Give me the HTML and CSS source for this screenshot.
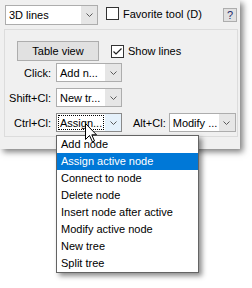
FILE: index.html
```html
<!DOCTYPE html>
<html>
<head>
<meta charset="utf-8">
<link rel="stylesheet" href="styles.css">
</head>
<body>
<div class="stage">
  <div class="window">
    <div class="toprow">
      <div class="combo wide">
        <span class="combo-text">3D lines</span>
        <span class="combo-btn"><svg width="7" height="4" viewBox="0 0 7 4"><polyline points="0.5,0.5 3.5,3.5 6.5,0.5" fill="none" stroke="#5a5a5a" stroke-width="1"/></svg></span>
      </div>
      <div class="check fav"><span class="box"></span><span class="check-label">Favorite tool (D)</span></div>
      <span class="help">?</span>
    </div>
    <div class="group">
      <div class="btnrow">
        <div class="btn">Table view</div>
        <div class="check show"><span class="box"><svg width="11" height="11" viewBox="0 0 11 11"><polyline points="1.5,5.5 4,8 9.5,2.5" fill="none" stroke="#222" stroke-width="1.2"/></svg></span><span class="check-label">Show lines</span></div>
      </div>
      <div class="rows">
        <div class="row">
          <span class="lbl">Click:</span>
          <div class="combo small">
            <span class="combo-text">Add n...</span>
            <span class="combo-btn"><svg width="7" height="4" viewBox="0 0 7 4"><polyline points="0.5,0.5 3.5,3.5 6.5,0.5" fill="none" stroke="#5a5a5a" stroke-width="1"/></svg></span>
          </div>
        </div>
        <div class="row">
          <span class="lbl">Shift+Cl:</span>
          <div class="combo small">
            <span class="combo-text">New tr...</span>
            <span class="combo-btn"><svg width="7" height="4" viewBox="0 0 7 4"><polyline points="0.5,0.5 3.5,3.5 6.5,0.5" fill="none" stroke="#5a5a5a" stroke-width="1"/></svg></span>
          </div>
        </div>
        <div class="row">
          <span class="lbl">Ctrl+Cl:</span>
          <div class="combo small open">
            <span class="combo-text"><span class="focus">Assign...</span></span>
            <span class="combo-btn"><svg width="7" height="4" viewBox="0 0 7 4"><polyline points="0.5,0.5 3.5,3.5 6.5,0.5" fill="none" stroke="#5a5a5a" stroke-width="1"/></svg></span>
          </div>
          <span class="lbl2">Alt+Cl:</span>
          <div class="combo alt">
            <span class="combo-text">Modify ...</span>
            <span class="combo-btn"><svg width="7" height="4" viewBox="0 0 7 4"><polyline points="0.5,0.5 3.5,3.5 6.5,0.5" fill="none" stroke="#5a5a5a" stroke-width="1"/></svg></span>
          </div>
        </div>
      </div>
    </div>
  </div>
  <ul class="menu">
    <li>Add node</li>
    <li class="sel">Assign active node</li>
    <li>Connect to node</li>
    <li>Delete node</li>
    <li>Insert node after active</li>
    <li>Modify active node</li>
    <li>New tree</li>
    <li>Split tree</li>
  </ul>
  <svg class="cursor" width="13" height="20" viewBox="0 0 13 20"><path d="M0.5,0.5 L0.5,16.5 L4.5,12.5 L7.5,19 L9.5,18 L6.8,11.8 L11.5,11.8 Z" fill="#fff" stroke="#000" stroke-width="1" stroke-linejoin="miter"/></svg>
</div>
</body>
</html>
```

FILE: styles.css
```css
* { box-sizing: border-box; }
html, body { margin: 0; padding: 0; background: #fff; }
body {
  font-family: "Liberation Sans", Arial, sans-serif;
  font-size: 11px;
  color: #000;
}
.stage {
  position: relative;
  width: 252px;
  height: 288px;
  overflow: hidden;
}
.window {
  width: 240px;
  height: 149px;
  background: #f0f0f0;
  box-shadow: 3px 3px 6px rgba(0, 0, 0, 0.5);
}
.toprow {
  display: flex;
  align-items: flex-start;
  padding: 5px 3px 0 5px;
}
.combo {
  display: flex;
  background: #fff;
  border: 1px solid #adadad;
  height: 19px;
}
.combo.wide { width: 93px; height: 20px; }
.combo.small { width: 66px; }
.combo.alt { width: 67px; }
.combo-text {
  flex: 1;
  display: flex;
  align-items: center;
  padding-left: 3px;
  white-space: nowrap;
  overflow: hidden;
}
.combo-btn {
  width: 16px;
  display: flex;
  align-items: center;
  justify-content: center;
  background: #e6e6e6;
}
.combo.open { border-color: #8a8a8a; }
.combo.open .combo-btn { background: #e5f1fb; }
.combo.open .combo-text { padding: 1px; }
.focus {
  display: flex;
  align-items: center;
  height: 100%;
  width: 100%;
  padding-left: 1px;
  border: 1px dotted #000;
}
.check {
  display: flex;
  align-items: center;
}
.box {
  width: 13px;
  height: 13px;
  border: 1px solid #333;
  background: #fff;
  display: flex;
  align-items: center;
  justify-content: center;
}
.check-label { margin-left: 4px; }
.fav { margin-left: 8px; margin-top: 2px; }
.help {
  margin-left: auto;
  margin-top: 3px;
  width: 14px;
  height: 14px;
  border: 1px solid #adadad;
  background: #e1e1e1;
  color: #1b2a6b;
  display: flex;
  align-items: center;
  justify-content: center;
  font-size: 11px;
}
.group {
  margin: 4px 0 0 4px;
  width: 234px;
  height: 108px;
  border: 1px solid #dcdcdc;
  padding-top: 11px;
}
.btnrow {
  display: flex;
  align-items: center;
  padding-left: 12px;
}
.btn {
  width: 82px;
  height: 20px;
  border: 1px solid #adadad;
  background: #e1e1e1;
  display: flex;
  align-items: center;
  justify-content: center;
}
.show { margin-left: 12px; }
.rows {
  display: flex;
  flex-direction: column;
  gap: 6px;
  margin-top: 2px;
}
.row {
  display: flex;
  align-items: center;
}
.lbl {
  width: 46px;
  text-align: right;
  margin-right: 5px;
}
.lbl2 {
  margin-left: 11px;
  margin-right: 3px;
}
.menu {
  position: absolute;
  left: 56px;
  top: 135px;
  width: 143px;
  margin: 0;
  padding: 0;
  list-style: none;
  background: #fff;
  border: 1px solid #646464;
  box-shadow: 3px 3px 5px rgba(0, 0, 0, 0.45);
}
.menu li {
  height: 17px;
  line-height: 17px;
  padding-left: 4px;
  white-space: nowrap;
}
.menu li.sel {
  background: #0078d7;
  color: #fff;
}
.cursor {
  position: absolute;
  left: 85px;
  top: 123px;
}
```
